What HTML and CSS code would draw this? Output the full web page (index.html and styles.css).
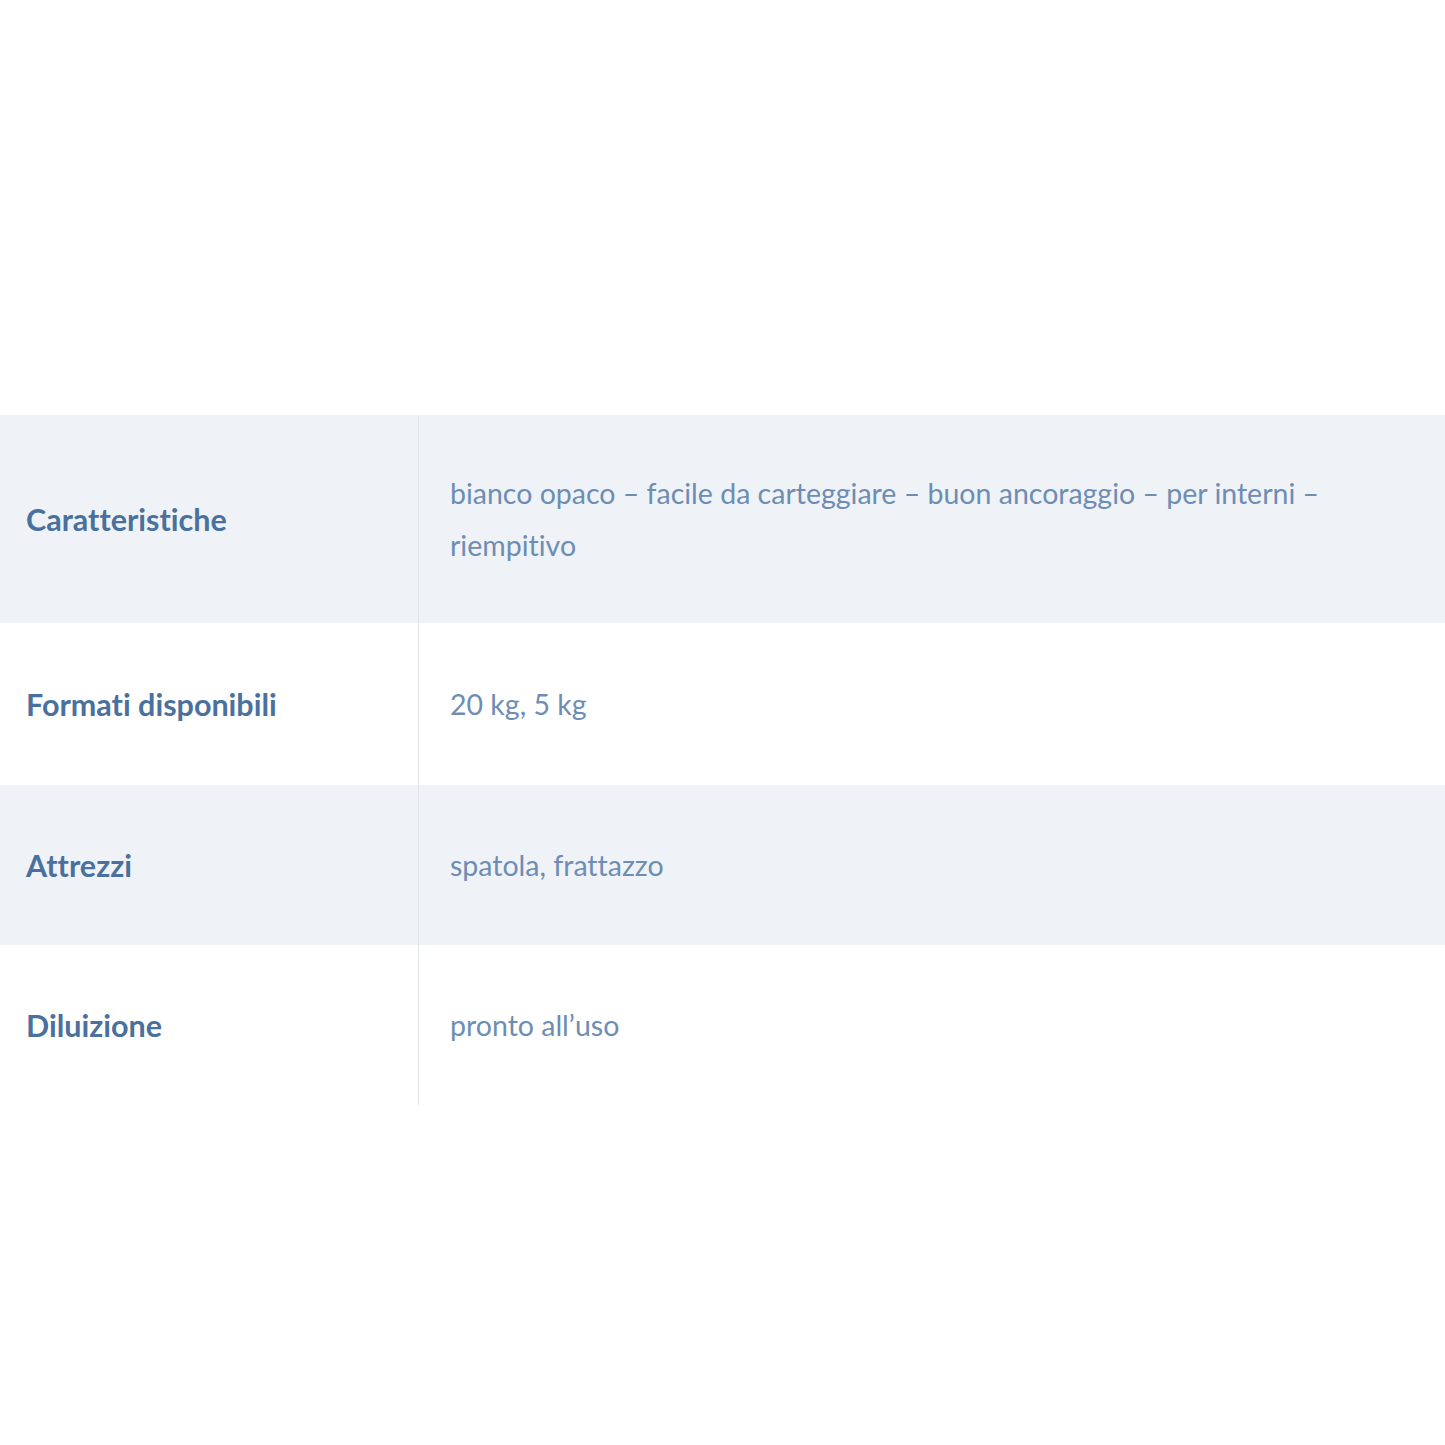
FILE: index.html
```html
<!DOCTYPE html>
<html lang="it">
<head>
    <meta charset="UTF-8">
    <meta name="viewport" content="width=device-width, initial-scale=1.0">
    <title>Scheda prodotto</title>
    <link rel="stylesheet" href="styles.css">
</head>
<body>
    <div class="page">
        <!-- Specifiche prodotto -->
        <table class="spec-table">
            <tbody>
                <tr class="row-shaded">
                    <th>Caratteristiche</th>
                    <td>bianco opaco – facile da carteggiare – buon ancoraggio – per interni – riempitivo</td>
                </tr>
                <tr class="row-tall">
                    <th>Formati disponibili</th>
                    <td>20 kg, 5 kg</td>
                </tr>
                <tr class="row-shaded">
                    <th>Attrezzi</th>
                    <td>spatola, frattazzo</td>
                </tr>
                <tr>
                    <th>Diluizione</th>
                    <td>pronto all’uso</td>
                </tr>
            </tbody>
        </table>
    </div>
</body>
</html>
```

FILE: styles.css
```css
body {
    margin: 0;
    padding: 0;
    background-color: #ffffff;
    font-family: Lato, "Open Sans", sans-serif;
    font-variant-ligatures: none;
}

.page {
    padding-top: 415px;
}

.spec-table {
    width: 100%;
    border-collapse: collapse;
}

.spec-table th,
.spec-table td {
    height: 56px;
    padding: 52px 0;
    line-height: 52px;
    text-align: left;
    vertical-align: middle;
}

.spec-table th {
    width: 392px;
    padding-left: 26px;
    font-size: 30.5px;
    font-weight: 700;
    color: #4a719d;
    border-right: 1px solid #e1e4e8;
}

.spec-table td {
    padding-left: 31px;
    padding-right: 90px;
    font-size: 28.5px;
    font-weight: 400;
    color: #6e8db3;
}

.row-shaded {
    background-color: #eff3f7;
}

.spec-table .row-tall th,
.spec-table .row-tall td {
    height: 58px;
}
```
